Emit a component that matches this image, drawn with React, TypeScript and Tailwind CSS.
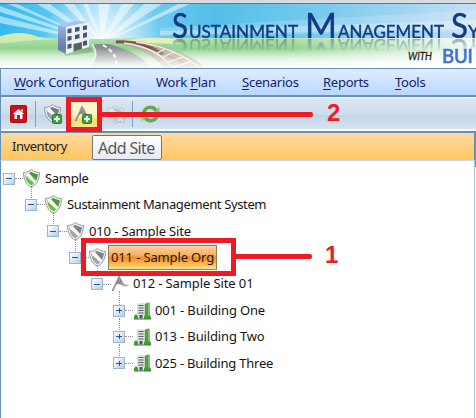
import React from "react";

const SHIELD = "M9 0.8C6.5 2.6 4 3.4 1.2 3.4C1.2 9.5 3.4 14.4 9 17.3C14.6 14.4 16.8 9.5 16.8 3.4C14 3.4 11.5 2.6 9 0.8Z";
const SHIELD_IN = "M9 3C7 4.3 5.2 4.9 3 5.1C3.3 9.7 5 13 9 15.3C13 13 14.7 9.7 15 5.1C12.800 4.900 11 4.300 9 3Z";

function Shield({ color, dark }: { color: string; dark: string }) {
  return (
    <svg width="17" height="19" viewBox="0.700 0.200 16.600 17.600" preserveAspectRatio="none" className="block shrink-0">
      <path d={SHIELD} fill="#ececec" stroke="#939393" strokeWidth="0.9" />
      <path d={SHIELD_IN} fill={color} />
      <path d="M9 3C11 4.300 12.800 4.900 15 5.100C14.900 7 14.500 9 13.600 10.600L6.500 3.900Z" fill={dark} />
      <path d="M4.200 4.700L6.400 4L13.300 11.200L11.800 13.300L3.300 6.300Z" fill="#fafafa" />
      <path d="M3.300 7.500L10.800 14.100L9 15.300C5.500 13 3.700 10.500 3.300 7.500Z" fill={color} />
    </svg>
  );
}

function PlusBadge() {
  return (
    <svg width="10" height="10" viewBox="0 0 10 10" className="absolute right-0 bottom-0">
      <rect x="0.500" y="0.500" width="9" height="9" rx="1.200" fill="#42a33c" stroke="#247d2b" />
      <path d="M5 2.200V7.800M2.200 5H7.800" stroke="#fff" strokeWidth="2" />
    </svg>
  );
}

function Flag() {
  return (
    <svg width="19" height="18" viewBox="0 0 19 18" className="block shrink-0">
      <defs>
        <linearGradient id="flag" x1="0" x2="1" y1="0" y2="0.600">
          <stop offset="0" stopColor="#c9c9c9" />
          <stop offset="0.450" stopColor="#8a8a8a" />
          <stop offset="1" stopColor="#b4b4b4" />
        </linearGradient>
      </defs>
      <path d="M8.300 1.500C10.300 3 10.800 6 12.500 8.200C14 9.800 16 9.600 18.300 9.800C16.500 12 13.500 12 11.500 10.600C9.500 9.200 7.500 8.300 5.200 9.500Z" fill="url(#flag)" />
      <path d="M8.300 1.300L1.500 16" stroke="#7b7b7b" strokeWidth="1.700" />
      <path d="M7.800 1.600L1.500 14.800" stroke="#d2d2d2" strokeWidth="0.600" />
    </svg>
  );
}

function Building() {
  return (
    <svg width="19" height="18" viewBox="0 0 19 18" className="block shrink-0">
      <path d="M11.500 2L15 0.500L17 1.500V16.500H11.500Z" fill="#4e9e4a" />
      <path d="M15 0.500L17 1.500V16.500H15Z" fill="#87bd7c" />
      <path d="M4 1.500L11.500 1V16.500H4Z" fill="#dde1de" />
      <path d="M5.500 3.500H10.500M5.500 6H10.500M5.500 8.500H10.500M5.500 11H10.500" stroke="#59635d" strokeWidth="1.100" />
      <path d="M6.500 13H9.500V16.500H6.500Z" fill="#4f5852" />
      <path d="M1 17V14.200L3 12L5 14.200V17ZM11 17V14.500L12.500 12.500L14 14.500L16.500 12.800L18 15V17Z" fill="#3da035" />
      <path d="M1 17H18" stroke="#3a7d36" />
    </svg>
  );
}

function Title() {
  return (
    <svg
      width="476"
      height="34"
      viewBox="0 0 476 34"
      fontFamily="Lato, sans-serif"
      fill="#123a86"
      stroke="#123a86"
      strokeWidth="0.450"
      className="absolute top-0 left-0 block [-webkit-box-reflect:below_1px_linear-gradient(transparent_62%,rgba(0,0,0,0.4))]"
    >
      <text x="172" y="33.500" fontSize="34" textLength="16" lengthAdjust="spacingAndGlyphs">S</text>
      <text x="189" y="33.500" fontSize="18" textLength="109" lengthAdjust="spacingAndGlyphs">USTAINMENT</text>
      <text x="305" y="33.500" fontSize="34" textLength="32" lengthAdjust="spacingAndGlyphs">M</text>
      <text x="338" y="33.500" fontSize="18" textLength="106" lengthAdjust="spacingAndGlyphs">ANAGEMENT</text>
      <text x="451" y="33.500" fontSize="34" textLength="17" lengthAdjust="spacingAndGlyphs">S</text>
      <text x="468" y="33.500" fontSize="18">Y</text>
    </svg>
  );
}

function Banner() {
  return (
    <div className="relative h-[64px] overflow-hidden">
      <svg width="476" height="64" viewBox="0 0 476 64" className="block">
        <defs>
          <linearGradient id="sky" x1="0" x2="1">
            <stop offset="0" stopColor="#32b9ee" />
            <stop offset="0.220" stopColor="#88d3f5" />
            <stop offset="0.450" stopColor="#53bfe8" />
            <stop offset="0.700" stopColor="#7dcbed" />
            <stop offset="1" stopColor="#c6dff5" />
          </linearGradient>
          <radialGradient id="sun" gradientUnits="userSpaceOnUse" cx="102" cy="39" r="60">
            <stop offset="0" stopColor="#fff" />
            <stop offset="0.400" stopColor="#fff" stopOpacity="0.600" />
            <stop offset="1" stopColor="#fff" stopOpacity="0" />
          </radialGradient>
          <linearGradient id="grass" x1="0" x2="0" y1="0" y2="1">
            <stop offset="0" stopColor="#c4e6c0" />
            <stop offset="0.450" stopColor="#8ed28a" />
            <stop offset="1" stopColor="#fafdf9" />
          </linearGradient>
          <linearGradient id="pale" x1="0" x2="1">
            <stop offset="0.600" stopColor="#fff" stopOpacity="0" />
            <stop offset="1" stopColor="#fff" stopOpacity="0.900" />
          </linearGradient>
          <linearGradient id="wall" x1="0" x2="0" y1="0" y2="1">
            <stop offset="0" stopColor="#9cb5e5" />
            <stop offset="1" stopColor="#576b9c" />
          </linearGradient>
          <linearGradient id="road" x1="0" x2="0" y1="0" y2="1">
            <stop offset="0" stopColor="#85888c" />
            <stop offset="0.650" stopColor="#a6a8ac" />
            <stop offset="1" stopColor="#e8e8e9" />
          </linearGradient>
          <linearGradient id="bottom" x1="0" x2="0" y1="0" y2="1">
            <stop offset="0" stopColor="#fff" stopOpacity="0" />
            <stop offset="1" stopColor="#fff" stopOpacity="0.900" />
          </linearGradient>
        </defs>
        <rect width="476" height="64" fill="url(#sky)" />
        <g fill="#fff" opacity="0.500">
          <path d="M102 39L0 2V8ZM102 39L0 12V19ZM102 39L8 0H17ZM102 39L37 0H50ZM102 39L64 0H74ZM102 39L83 0H88ZM102 39L98 0H110ZM102 39L122 0H134ZM102 39L144 0H162ZM102 39L178 0H190Z" />
        </g>
        <path d="M160 24L476 6V28L160 32Z" fill="#fff" opacity="0.180" />
        <path d="M160 27L476 16V25L160 31Z" fill="#fff" opacity="0.300" />
        <rect width="200" height="50" fill="url(#sun)" />
        <path d="M0 32C16 28 25 28 38 33L70 35H100L135 34H476V64H0Z" fill="url(#grass)" />
        <path d="M0 33C16 28 25 28 38 33L55 36C30 35 18 39 0 39Z" fill="#d8edb2" opacity="0.800" />
        <path d="M120 38C135 33 155 33 178 35V40Z" fill="#e5efbb" />
        <rect y="34" width="476" height="30" fill="url(#pale)" />
        <path d="M97 40H108C125 44 144 53 151 64H88C98 57 99 48 93 41Z" fill="url(#road)" />
        <path d="M92 40C98 48 97 56 84 64" fill="none" stroke="#e5efd8" strokeWidth="1.300" />
        <path d="M103 41C113 47 119 55 115 64" fill="none" stroke="#fff" strokeWidth="2" strokeDasharray="4 3" />
        <path d="M113 38C130 35 148 38 167 44C187 49 197 56 205 64H164C155 52 138 43 113 38Z" fill="#b8ab98" />
        <path d="M116 38C134 37 150 42 163 50" fill="none" stroke="#795a47" strokeWidth="3" />
        <path d="M163 50C175 54 184 58 190 64" fill="none" stroke="#a08d76" strokeWidth="2" />
        <path d="M124 39C147 42 163 51 172 64M136 38C160 41 183 50 200 64" fill="none" stroke="#eee9e2" strokeWidth="1.300" />
        <path d="M157 49L165 45M163 53L174 48M168 58L183 53M172 63L190 58" stroke="#f3ede4" strokeWidth="1.300" />
        <path d="M62 47L89 42L94 48L66 52Z" fill="#5f9c63" opacity="0.600" />
        <path d="M58 21L66 23V50L58 46Z" fill="url(#wall)" />
        <path d="M58 21L75 17L89 18L66 23Z" fill="#a5c2f0" />
        <path d="M66 23L89 18V43L66 50Z" fill="#eef0f8" />
        <path d="M67.500 25L71.500 24.200V28.800L67.500 29.600ZM75 23.600L79.500 22.800V27L75 28ZM83 22L87 21.200V25.500L83 26.300ZM67.500 32.500L71.500 31.700V36L67.500 37ZM75 31L79.500 30V34.300L75 35.300ZM83 29.200L87 28.300V33L83 34ZM67.500 40.500L71.500 39.500V44L67.500 45ZM83 37.200L87 36.300V41L83 42Z" fill="#4a5569" />
        <path d="M73.500 40L82 38V45L73.500 48Z" fill="#4f6659" />
        <rect y="44" width="476" height="20" fill="url(#bottom)" />
        <text x="408" y="56" fontFamily="Lato, sans-serif" fontStyle="italic" fontSize="12" fill="#17251e" stroke="#17251e" strokeWidth="0.300" textLength="24" lengthAdjust="spacingAndGlyphs">WITH</text>
        <text x="442" y="59" fontFamily="Lato, sans-serif" fontSize="18.500" fill="#3b70d2" stroke="#3b70d2" strokeWidth="0.700">BUI</text>
      </svg>
      <Title />
    </div>
  );
}

const menus = [
  { key: "W", rest: "ork Configuration", place: "w-[142px]" },
  { pre: "Work ", key: "P", rest: "lan", place: "w-[86px]" },
  { key: "S", rest: "cenarios", place: "w-[81px]" },
  { key: "R", rest: "eports", place: "w-[72px]" },
  { key: "T", rest: "ools", place: "w-[50px]" },
];

const rows = [
  { label: "Sample", kind: "green", indent: "pl-[2px]", tracking: "tracking-[-0.300px]" },
  { label: "Sustainment Management System", kind: "green", indent: "pl-[24px]", tracking: "tracking-[-0.370px]" },
  { label: "010 - Sample Site", kind: "gray", indent: "pl-[46px]", tracking: "tracking-[-0.140px]" },
  { label: "011 - Sample Org", kind: "gray", indent: "pl-[68px]", tracking: "tracking-[-0.140px]", selected: true },
  { label: "012 - Sample Site 01", kind: "flag", indent: "pl-[90px]", tracking: "tracking-[-0.110px]" },
  { label: "001 - Building One", kind: "building", indent: "pl-[112px]", tracking: "tracking-[-0.150px]", closed: true },
  { label: "013 - Building Two", kind: "building", indent: "pl-[112px]", tracking: "tracking-[-0.150px]", closed: true },
  { label: "025 - Building Three", kind: "building", indent: "pl-[112px]", tracking: "tracking-[-0.200px]", closed: true },
];

function NodeIcon({ kind }: { kind: string }) {
  if (kind === "green") return <Shield color="#6dbd55" dark="#459d37" />;
  if (kind === "gray") return <Shield color="#a2a5a6" dark="#7d8183" />;
  if (kind === "flag") return <Flag />;
  return <Building />;
}

function Expander({ closed, root }: { closed?: boolean; root?: boolean }) {
  return (
    <div className="relative flex h-full w-[20px] shrink-0 items-center">
      {!root && <span className="absolute top-[-6px] left-[6px] h-[14px] border-l border-dotted border-[#929292]" />}
      <span className="relative flex size-[12px] items-center justify-center border border-[#9db5cc] bg-gradient-to-br from-white to-[#b6d0e8]">
        <span className="h-px w-[6px] bg-[#345580]" />
        {closed && <span className="absolute h-[5px] w-px bg-[#345580]" />}
      </span>
      <span className="w-[8px] border-t border-dotted border-[#929292]" />
    </div>
  );
}

export default function App() {
  return (
    <div className="relative h-[418px] w-[476px] overflow-hidden bg-white font-['Noto_Sans',sans-serif] text-[13px]">
      <div className="h-[3px] bg-[#d9dce1]" />
      <div className="h-px bg-[#6d7276]" />
      <Banner />
      <nav className="flex h-[29px] items-center border-t border-b-2 border-l border-[#688fb5] bg-gradient-to-b from-[#e0edff] to-[#b8d7ff] pl-[13px] tracking-[-0.250px] whitespace-pre text-[#15216b]">
        {menus.map((m) => (
          <span key={m.key} className={`translate-y-px ${m.place}`}>
            {m.pre}
            <span className="underline underline-offset-2">{m.key}</span>
            {m.rest}
          </span>
        ))}
      </nav>
      <div className="flex h-[36px] items-center border-b-2 border-l border-[#688fb5] bg-[linear-gradient(#f6f9fc_0,#dae6f1_2px,#cedeed_50%,#c2d5e7_55%,#d5e4f1_94%,#fff_96%)] pl-[9px]">
        <svg width="17" height="18" viewBox="0 0 17 18" className="block">
          <rect x="0.500" y="0.500" width="16" height="17" rx="1" fill="#d40b1b" stroke="#a60c18" />
          <path d="M2.700 9L8.500 4L14.300 9H12.500V14H4.500V9ZM11 4.500H13V7L11 5.500Z" fill="#fff" />
          <path d="M7 10H10V14H7Z" fill="#c01a24" />
        </svg>
        <span className="ml-[8px] h-[26px] w-px bg-[#789fc5]" />
        <span className="relative ml-[8px] h-[20px] w-[18px]">
          <Shield color="#9da2a4" dark="#747b7f" />
          <PlusBadge />
        </span>
        <span className="ml-[9px] flex h-[26px] w-[26px] items-center bg-[linear-gradient(#fff4ca_50%,#ffd970_75%,#ffe591)] pl-[3px]">
          <span className="relative h-[19px] w-[18px]"><Flag /><PlusBadge /></span>
        </span>
        <span className="relative ml-[10px] h-[18px] w-[18px] opacity-35 grayscale">
          <Shield color="#a7adb1" dark="#91989d" />
          <svg width="9" height="9" viewBox="0 0 9 9" className="absolute right-0 bottom-0">
            <rect width="9" height="9" fill="#a4adb3" />
            <path d="M2 2L7 7M7 2L2 7" stroke="#fff" strokeWidth="1.500" />
          </svg>
        </span>
        <span className="ml-[7px] h-[26px] w-px bg-[#789fc5]" />
        <svg width="19" height="18" viewBox="0 0 18 18" preserveAspectRatio="none" className="ml-[8px] block">
          <path d="M2.500 8C4 1.500 11 0.500 14.300 5.500" fill="none" stroke="#62a84d" strokeWidth="3.400" />
          <path d="M17.500 2V9H10Z" fill="#86c66d" />
          <path d="M15.500 10.500C13.500 16.500 7 17.500 3.700 12.500" fill="none" stroke="#62a84d" strokeWidth="3.400" />
          <path d="M0.500 16.500V9.500H8Z" fill="#91cd78" />
        </svg>
      </div>
      <div className="flex h-[28px] items-center border-r-2 border-b border-l border-r-[#688fb5] border-b-[#c1daf5] border-l-[#688fb5] bg-gradient-to-b from-[#ffdaa0] to-[#ffc65c] pl-[11px] text-[#202020]">
        <span className="tracking-[-0.450px]">Inventory</span>
      </div>
      <div className="flex h-[257px]">
        <div className="grow border-r border-l border-r-[#a9c3df] border-l-[#688fb5] pt-[4.400px]">
          {rows.map((r) => (
            <div key={r.label} className={`flex h-[26.400px] items-center ${r.indent}`}>
              <Expander closed={r.closed} root={r.label === "Sample"} />
              <div className="flex w-[20px] shrink-0"><NodeIcon kind={r.kind} /></div>
              <span className={`whitespace-nowrap ${r.tracking} ${r.selected
                ? "ml-[-1px] flex h-[25px] w-[109px] items-center border border-[#8f8056] bg-[linear-gradient(#fbd5a4,#f8ad60_40%,#f58c25_52%,#fce181)] pl-[2px] text-[#241a10]"
                : "pl-[2px] text-[#151515]"}`}>
                {r.label}
              </span>
            </div>
          ))}
        </div>
        <div className="w-px">
          <div className="h-[6px] bg-[#688fb5]" />
        </div>
      </div>

      <div className="absolute top-[135px] left-[92px] flex h-[25px] w-[70px] items-center rounded-[2px] border border-[#767676] bg-gradient-to-b from-white to-[#e7e9f3] pl-[5px] text-[16px] tracking-[-0.650px] whitespace-nowrap text-[#585858]">
        Add Site
      </div>
      <div className="absolute top-[97px] left-[66px] h-[35px] w-[36px] border-[5px] border-[#ed1c24]" />
      <div className="absolute top-[112px] left-[102px] h-[5px] w-[211px] rounded-r-[2px] bg-[#ed1c24]" />
      <div className="absolute top-[100px] left-[327px] font-['Liberation_Sans',sans-serif] text-[24px] leading-[26px] font-bold text-[#ed1c24]">2</div>
      <div className="absolute top-[238px] left-[81px] h-[38px] w-[155px] border-[5px] border-[#ed1c24]" />
      <div className="absolute top-[254px] left-[236px] h-[5px] w-[76px] rounded-r-[2px] bg-[#ed1c24]" />
      <div className="absolute top-[242px] left-[325px] font-['Liberation_Sans',sans-serif] text-[24px] leading-[26px] font-bold text-[#ed1c24]">1</div>
    </div>
  );
}
